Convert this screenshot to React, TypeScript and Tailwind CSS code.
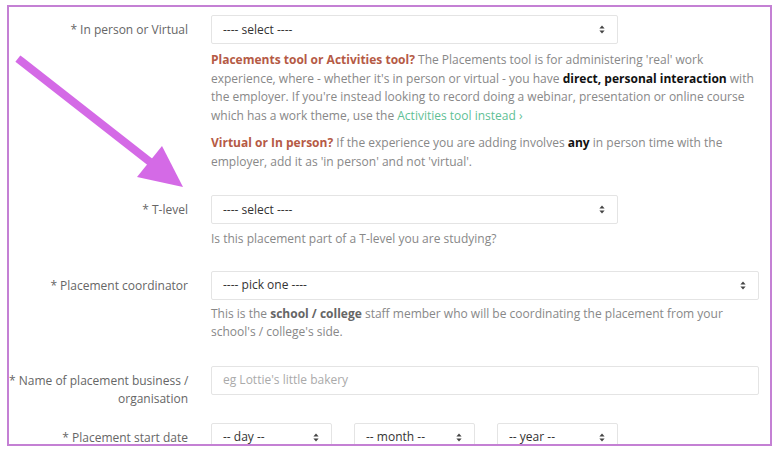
import React from 'react';

const SelectArrows = () => (
    <svg width="6" height="9" viewBox="0 0 6 9" className="shrink-0">
        <path d="M3 0.5 L5.6 3.6 L0.4 3.6 Z" fill="#444" />
        <path d="M3 8.5 L5.6 5.4 L0.4 5.4 Z" fill="#444" />
    </svg>
);

function FakeSelect({ text, className = '' }: { text: string; className?: string }) {
    return (
        <div
            className={`h-[29px] flex items-center justify-between pl-[11px] pr-[12px] bg-white border border-[#e4e4e4] rounded-[2px] text-[12px] text-[#333] font-medium ${className}`}
        >
            <span>{text}</span>
            <SelectArrows />
        </div>
    );
}

function Row({
    label,
    children,
    className = '',
}: {
    label: React.ReactNode;
    children: React.ReactNode;
    className?: string;
}) {
    return (
        <div className={`flex items-start ${className}`}>
            <div className="w-[179px] shrink-0 pt-[6px] text-right text-[12px] leading-[18.5px] text-[#666] whitespace-nowrap">
                {label}
            </div>
            <div className="ml-[23px] w-[548px]">{children}</div>
        </div>
    );
}

export default function App() {
    return (
        <div
            className="relative w-[780px] h-[452px] bg-white overflow-hidden"
            style={{ fontFamily: '"Open Sans", "Noto Sans", sans-serif' }}
        >
            <div className="absolute left-[7px] top-[5px] w-[765px] h-[441px] border-2 border-[#c480d4] overflow-hidden">
                <div className="pt-[8px]">
                    <Row label="* In person or Virtual">
                        <FakeSelect text="---- select ----" className="w-[407px]" />
                        <div className="mt-[7px] text-[12px] leading-[18.5px] text-[#888] whitespace-nowrap">
                            <p>
                                <b className="text-[#b55a45]">Placements tool or Activities tool?</b> The Placements tool is for administering 'real' work
                                <br />
                                experience, where - whether it's in person or virtual - you have{' '}
                                <b className="text-[#111]">direct, personal interaction</b> with
                                <br />
                                the employer. If you're instead looking to record doing a webinar, presentation or online course
                                <br />
                                which has a work theme, use the <span className="text-[#5fbf95]">Activities tool instead ›</span>
                            </p>
                            <p className="mt-[9px]">
                                <b className="text-[#b55a45]">Virtual or In person?</b> If the experience you are adding involves{' '}
                                <b className="text-[#111]">any</b> in person time with the
                                <br />
                                employer, add it as 'in person' and not 'virtual'.
                            </p>
                        </div>
                    </Row>

                    <Row label="* T-level" className="mt-[24px]">
                        <FakeSelect text="---- select ----" className="w-[407px]" />
                        <p className="mt-[6px] text-[12px] leading-[18.5px] text-[#888]">
                            Is this placement part of a T-level you are studying?
                        </p>
                    </Row>

                    <Row label="* Placement coordinator" className="mt-[22px]">
                        <FakeSelect text="---- pick one ----" className="w-[548px]" />
                        <p className="mt-[5px] text-[12px] leading-[18.5px] text-[#888] whitespace-nowrap">
                            This is the <b className="text-[#666]">school / college</b> staff member who will be coordinating the placement from your
                            <br />
                            school's / college's side.
                        </p>
                    </Row>

                    <Row
                        label={
                            <>
                                * Name of placement business /
                                <br />
                                organisation
                            </>
                        }
                        className="mt-[24px]"
                    >
                        <div className="h-[29px] flex items-center pl-[11px] bg-white border border-[#e4e4e4] rounded-[2px] text-[12px] text-[#aaa]">
                            eg Lottie's little bakery
                        </div>
                    </Row>

                    <Row label="* Placement start date" className="mt-[14px]">
                        <div className="flex gap-[22px]">
                            <FakeSelect text="-- day --" className="w-[121px]" />
                            <FakeSelect text="-- month --" className="w-[121px]" />
                            <FakeSelect text="-- year --" className="w-[121px]" />
                        </div>
                    </Row>
                </div>
            </div>

            <svg className="absolute left-0 top-0 pointer-events-none" width="780" height="452" viewBox="0 0 780 452">
                <line x1="21" y1="61" x2="150" y2="162" stroke="#d46ae6" strokeWidth="8" strokeLinecap="square" />
                <polygon points="137,177 162,146 183,187" fill="#d46ae6" />
            </svg>
        </div>
    );
}
